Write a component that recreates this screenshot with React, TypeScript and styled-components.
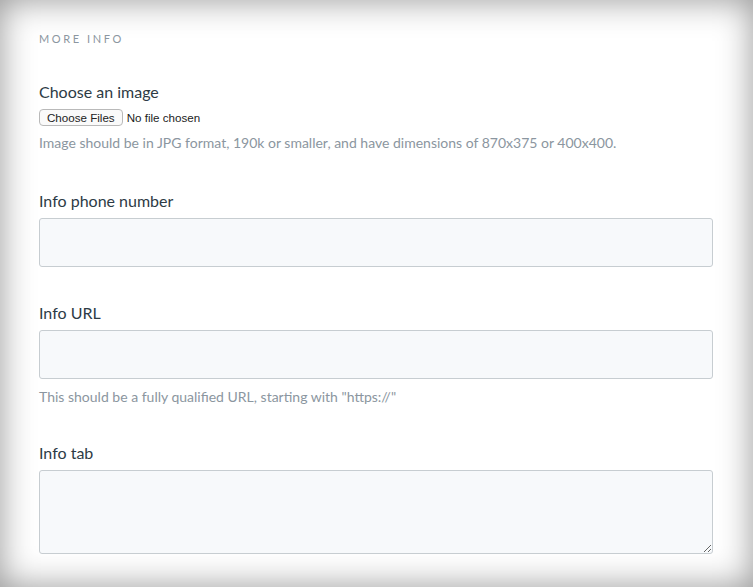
import styled, { createGlobalStyle } from "styled-components";

const GlobalStyle = createGlobalStyle`
    html, body {
        margin: 0;
        padding: 0;
        background: #ffffff;
    }
    * {
        box-sizing: border-box;
    }
`;

const Page = styled.div`
    width: 753px;
    height: 587px;
    overflow: hidden;
    background: #ffffff;
    box-shadow: inset 0 0 34px rgba(0, 0, 0, 0.42);
    font-family: Lato, "Open Sans", sans-serif;
`;

const Form = styled.form`
    padding: 31px 40px 0 39px;
    display: flex;
    flex-direction: column;
`;

const SectionTitle = styled.h2`
    margin: 0 0 35px;
    font-size: 11px;
    font-weight: 400;
    letter-spacing: 2.6px;
    line-height: 16px;
    color: #8b96a0;
    text-transform: uppercase;
`;

const Field = styled.div<{ $gap?: number }>`
    display: flex;
    flex-direction: column;
    margin-bottom: ${props => props.$gap ?? 36}px;
`;

const Label = styled.label`
    font-size: 16px;
    line-height: 20px;
    color: #2d3b45;
    margin-bottom: 7px;
`;

const FileInput = styled.input`
    font-family: "Liberation Sans", Arial, sans-serif;
    font-size: 11.6px;
    color: #222;
    height: 17px;
    margin: 0;
    &::file-selector-button {
        font-family: "Liberation Sans", Arial, sans-serif;
        font-size: 11.6px;
        height: 17px;
        padding: 0 7px;
        margin-right: 4px;
        background: #fafafa;
        color: #222;
        border: 1px solid #b9b9b9;
        border-radius: 4px;
    }
`;

const Hint = styled.p<{ $top?: number }>`
    margin: ${props => props.$top ?? 8}px 0 0;
    font-size: 14px;
    line-height: 18px;
    color: #8b96a0;
`;

const TextInput = styled.input`
    width: 674px;
    height: 49px;
    background: #f7f9fb;
    border: 1px solid #c7cdd1;
    border-radius: 3px;
    font-family: inherit;
    font-size: 14px;
    padding: 0 12px;
    outline: none;
`;

const TextArea = styled.textarea`
    width: 674px;
    height: 84px;
    background: #f7f9fb;
    border: 1px solid #c7cdd1;
    border-radius: 3px;
    font-family: inherit;
    font-size: 14px;
    padding: 8px 12px;
    outline: none;
    resize: vertical;
    display: block;
`;

function App() {
    return (
        <>
            <GlobalStyle />
            <Page>
                <Form onSubmit={e => e.preventDefault()}>
                    <SectionTitle>More info</SectionTitle>
                    <Field $gap={39}>
                        <Label htmlFor="info-image">Choose an image</Label>
                        <FileInput id="info-image" type="file" multiple />
                        <Hint>Image should be in JPG format, 190k or smaller, and have dimensions of 870x375 or 400x400.</Hint>
                    </Field>
                    <Field $gap={36}>
                        <Label htmlFor="info-phone">Info phone number</Label>
                        <TextInput id="info-phone" type="text" />
                    </Field>
                    <Field $gap={37}>
                        <Label htmlFor="info-url">Info URL</Label>
                        <TextInput id="info-url" type="text" />
                        <Hint $top={9}>This should be a fully qualified URL, starting with "https://"</Hint>
                    </Field>
                    <Field>
                        <Label htmlFor="info-tab">Info tab</Label>
                        <TextArea id="info-tab" />
                    </Field>
                </Form>
            </Page>
        </>
    );
}

export default App;
